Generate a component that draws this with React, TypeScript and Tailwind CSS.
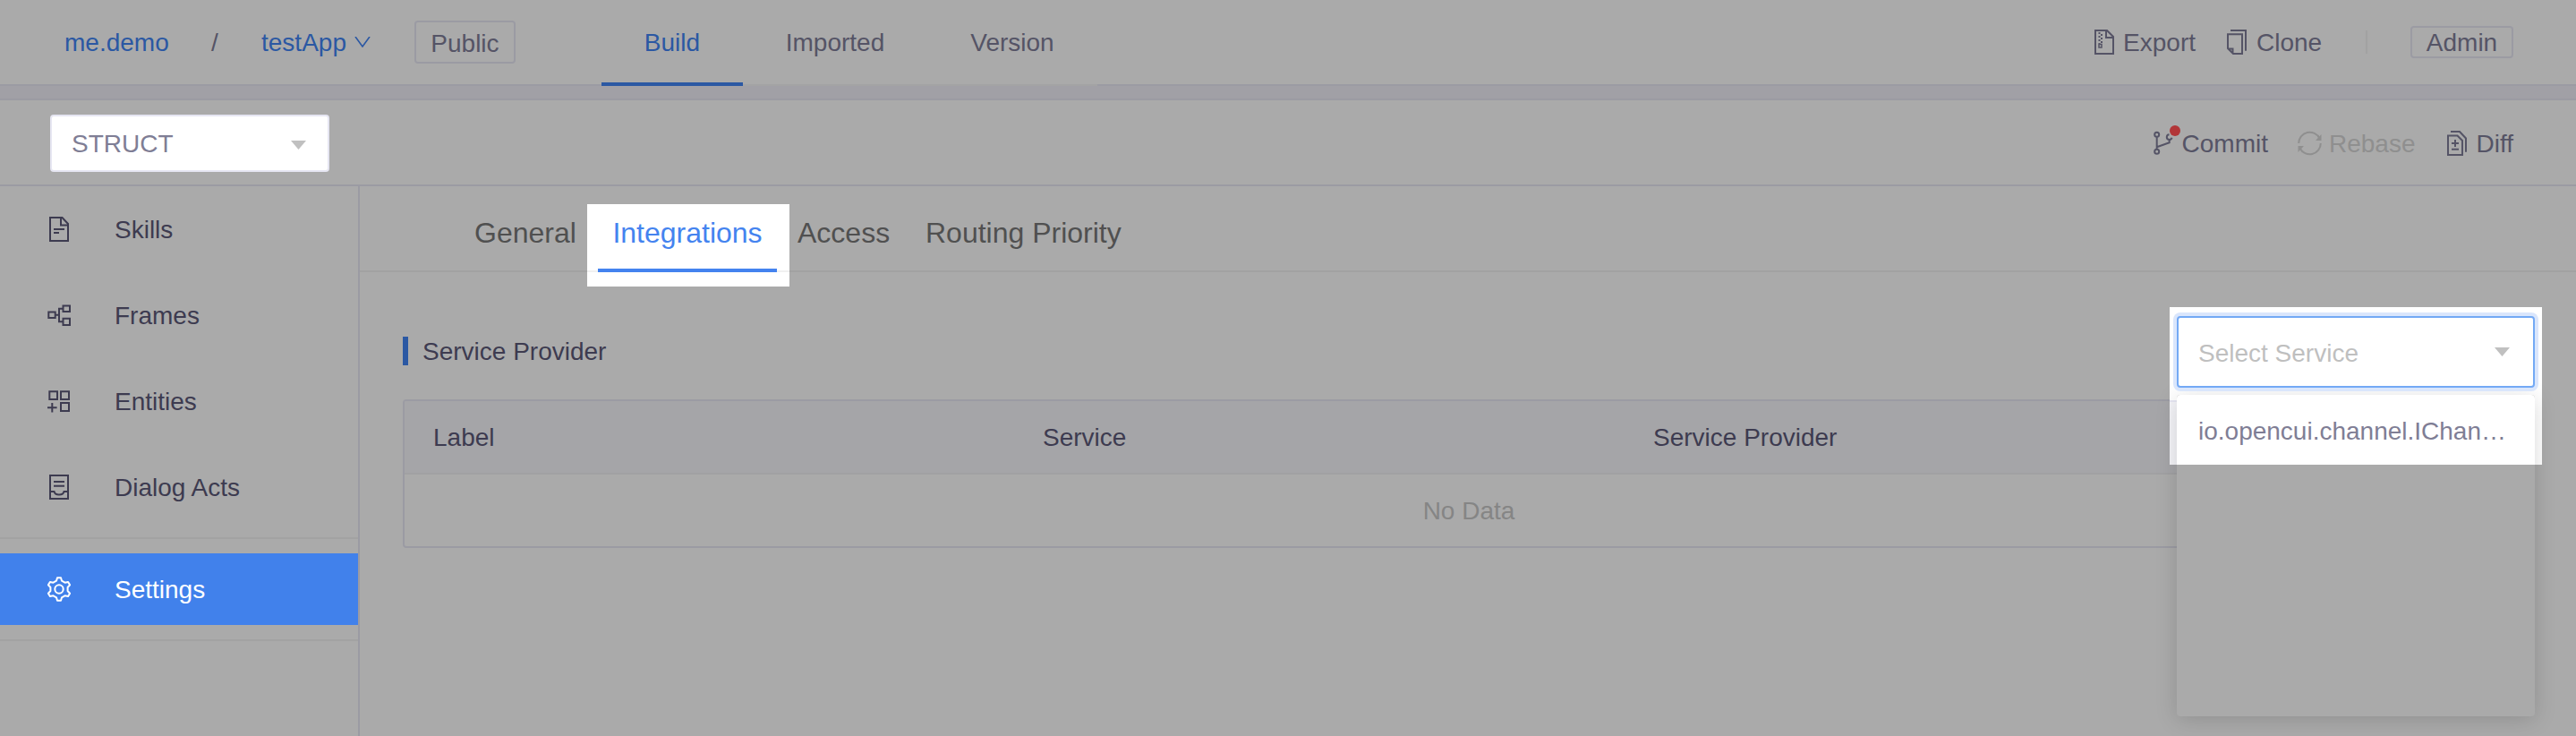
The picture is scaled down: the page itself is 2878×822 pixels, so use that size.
import type { ReactNode } from "react";

type IconProps = { className?: string; children: ReactNode; box?: string };

function Icon({ className = "", children, box = "0 0 28 28" }: IconProps) {
  return (
    <svg viewBox={box} fill="none" stroke="currentColor" strokeWidth="2" className={"shrink-0 " + className}>
      {children}
    </svg>
  );
}

const FileIcon = () => (
  <Icon className="size-7">
    <path d="M4 1h13.500L24 8v19H4z" />
    <path d="M16 1v8.500h8" />
    <path d="M8 14h12M8 18h6" />
  </Icon>
);
const TreeIcon = () => (
  <Icon className="size-7">
    <path d="M2.300 10.500h7.400V17H2.300zM18.500 3.500H26V10h-7.500zM18.500 17.800H26V25h-7.500zM10 13.800h4M18 6.800h-4v14.500h4" />
  </Icon>
);
const GridIcon = () => (
  <Icon className="size-7">
    <path d="M3.300 3.300H12V12H3.300zM16 3.300h9V12h-9zM16 16h9v9h-9zM1 21.300h10.600M6.300 16v10.600" />
  </Icon>
);
const InboxIcon = () => (
  <Icon className="size-7">
    <path d="M4 1h20v26H4zM8 8h12M8 12.800h12M4 19h4.500c1 4.600 10 4.600 11 0H24" />
  </Icon>
);
const GearIcon = () => (
  <Icon className="size-7">
    <circle cx="14" cy="14" r="4.700" />
    <path
      strokeLinejoin="round"
      d="M12 1.200h4l1 3.500 3.500 2 3.600-.8 2 3.400-2.500 2.700v4l2.500 2.700-2 3.400-3.600-.8-3.500 2-1 3.500h-4l-1-3.500-3.500-2-3.600.8-2-3.400L4.400 16v-4L1.900 9.300l2-3.400 3.600.8 3.500-2z"
    />
  </Icon>
);

const menu = [
  { label: "Skills", icon: <FileIcon /> },
  { label: "Frames", icon: <TreeIcon /> },
  { label: "Entities", icon: <GridIcon /> },
  { label: "Dialog Acts", icon: <InboxIcon /> },
];

function Header() {
  return (
    <header className="flex h-24 shrink-0 border-b-2 border-[#9b9ba3] text-[#555466]">
      <div className="flex w-[672px] shrink-0 items-center pl-[72px] text-[#2b58a3]">
        <span className="w-[164px] pt-0.5">me.demo</span>
        <span className="w-14 pt-0.5 text-[#555466]">/</span>
        <span className="pt-0.5">testApp</span>
        <Icon className="ml-[9px] h-3 w-[18px]" box="0 0 18 12">
          <path d="M1 0l8 11 8-11" strokeWidth="1.600" />
        </Icon>
        <span className="ml-[49px] flex h-12 w-[113px] items-center justify-center rounded border-2 border-[#9b9ba3] pt-1 text-[#555466]">
          Public
        </span>
      </div>
      <nav className="-mb-0.5 flex">
        <span className="flex w-[158px] items-center justify-center border-b-4 border-[#2b58a3] pt-1 text-[#2b58a3]">Build</span>
        <span className="flex w-[206px] items-center justify-center border-b-2 border-[#a3a3a4] pt-0.5">Imported</span>
        <span className="flex w-[190px] items-center justify-center border-b-2 border-[#a3a3a4] pt-0.5">Version</span>
      </nav>
      <div className="ml-auto flex items-center pr-[70px]">
        <Icon className="h-7 w-[22px]" box="0 0 22 28">
          <path d="M1 1h13l7 7v19H1zM13 1v8h8" />
          <path d="M5.500 3v13M8 5v12" strokeDasharray="2 2" />
          <path d="M5 16.500h3v3.500H5z" strokeWidth="1.500" />
        </Icon>
        <span className="ml-2.5 pt-0.5">Export</span>
        <Icon className="ml-[35px] h-7 w-[22px]" box="0 0 22 28">
          <path d="M1 5.300h16V27H7l-6-6zM4 1h17v22.700M1 21.500h5.500V27" />
        </Icon>
        <span className="ml-[11px] w-[74px] pt-0.5">Clone</span>
        <span className="ml-12 h-[26px] w-0.5 bg-[#a2a2a2]" />
        <span className="ml-12 flex h-9 w-[115px] items-center justify-center rounded border-2 border-[#9b9ba3] pt-0.5">Admin</span>
      </div>
    </header>
  );
}

function Toolbar() {
  return (
    <div className="flex h-24 shrink-0 items-center border-b-2 border-[#9b9ba3] pt-0.5 pr-[70px] pl-14 text-[#555466]">
      <div className="flex h-16 w-[312px] items-center justify-between rounded border-2 border-[#e6e6f2] bg-white pr-6 pl-[22px] text-[#7f7e95]">
        <span className="pt-px">STRUCT</span>
        <span className="mt-1 h-2.5 w-[17px] bg-[#c0c0c0] [clip-path:polygon(0_0,100%_0,50%_100%)]" />
      </div>
      <div className="ml-auto flex items-center">
        <span className="relative flex">
          <Icon className="h-7 w-[22px]" box="0 0 22 28">
            <circle cx="3.700" cy="4.300" r="2.500" />
            <circle cx="3.700" cy="23.300" r="2.500" />
            <path d="M17.500 4.200a2.900 2.900 0 1 0 3 3.600" />
            <path d="M3.700 7v13.500M3.700 18.300l14-5V9.500" />
          </Icon>
          <span className="absolute -top-1.5 left-[18px] size-3 rounded-full bg-[#b23638]" />
        </span>
        <span className="ml-2.5 pt-px">Commit</span>
        <span className="ml-[33px] flex items-center text-[#8f8f8f]">
          <Icon className="size-7">
            <path d="M1.200 14A12.300 12.300 0 0 1 24.500 8.500M25.800 14A12.300 12.300 0 0 1 2.500 19.500" />
            <path d="M26.500 4v7H20zM.5 24v-7H7z" fill="currentColor" stroke="none" />
          </Icon>
          <span className="ml-[7px] pt-px">Rebase</span>
        </span>
        <Icon className="ml-[35px] h-7 w-[22px]" box="0 0 22 28">
          <path d="M1 5.500h10.500l5.500 5.500v16H1zM4 1h10l7 7.500v15.200M5 14h8M9 10v8M5 20.800h8" />
        </Icon>
        <span className="ml-[11px] pt-px">Diff</span>
      </div>
    </div>
  );
}

function Sidebar() {
  return (
    <aside className="w-[402px] shrink-0 border-r-2 border-[#9b9ba3] text-[#3d3b50]">
      {menu.map((item) => (
        <div key={item.label} className="flex h-24 items-center gap-[48px] pl-[52px]">
          {item.icon}
          <span className="pt-0.5">{item.label}</span>
        </div>
      ))}
      <div className="mt-2 border-y-2 border-[#a2a2a2] py-4">
        <div className="flex h-20 items-center gap-[48px] bg-[#4181eb] pl-[52px] text-white">
          <GearIcon />
          <span className="pt-0.5">Settings</span>
        </div>
      </div>
    </aside>
  );
}

function Tabs() {
  return (
    <nav className="flex h-24 border-b-2 border-[#a2a2a2] pl-32 text-[32px] text-[#505050]">
      <span className="w-[126px] pt-9">General</span>
      <span className="mt-5 flex h-[92px] w-[226px] shrink-0 bg-white">
        <span className="mt-[74px] h-0.5 w-3 bg-[#f0f0f0]" />
        <span className="flex h-[76px] w-[200px] justify-center border-b-4 border-[#4483ef] pt-4 text-[#4483ef]">Integrations</span>
        <span className="mt-[74px] h-0.5 w-3.5 bg-[#f0f0f0]" />
      </span>
      <span className="ml-[9px] w-[143px] pt-9">Access</span>
      <span className="pt-9">Routing Priority</span>
    </nav>
  );
}

function ProviderTable() {
  return (
    <section className="pt-[72px] pr-[46px] pl-12 text-[#3d3b50]">
      <h2 className="flex h-8 items-center border-l-[6px] border-[#2b58a3] pt-0.5 pl-4">Service Provider</h2>
      <div className="mt-[38px] overflow-hidden rounded border-2 border-[#9b9ba3]">
        <div className="grid h-[82px] grid-cols-[681px_682px_682px_1fr] items-center border-b-2 border-[#a1a1a3] bg-[#a5a5a8] pt-px pl-8">
          <span>Label</span>
          <span>Service</span>
          <span>Service Provider</span>
        </div>
        <div className="flex h-20 items-center justify-center pt-0.5 text-[#858585]">No Data</div>
      </div>
    </section>
  );
}

function ServiceSelect() {
  return (
    <div className="absolute top-[135px] left-[2022px] h-[176px] w-[416px] bg-white">
      <div className="absolute top-[104px] left-0 h-[72px] w-2 border-t-2 border-[#e6e6f2] bg-[#f4f4f8]" />
      <div className="absolute top-[98px] left-2 h-[359px] w-[400px] rounded bg-[#aaaaaa] shadow-[0_4px_24px_rgba(0,0,0,0.15)]" />
      <div className="absolute top-[98px] left-2 h-[78px] w-[400px] rounded-t bg-white px-6 leading-[82px] text-[#7f7e95]">
        <div className="truncate">io.opencui.channel.IChannel</div>
      </div>
      <div className="absolute top-2.5 left-2 flex h-20 w-[400px] items-center justify-between rounded border-2 border-[#73a9f5] bg-white pr-[26px] pl-[22px] text-[#bfbfbf] shadow-[0_0_0_4px_#dae6fc]">
        <span className="pt-[3px]">Select Service</span>
        <span className="h-2.5 w-[17px] bg-[#c0c0c0] [clip-path:polygon(0_0,100%_0,50%_100%)]" />
      </div>
    </div>
  );
}

export default function App() {
  return (
    <div className="flex h-[822px] w-[2878px] flex-col overflow-hidden bg-[#aaaaaa] font-['Liberation_Sans',Arial,sans-serif] text-[28px] leading-8 whitespace-nowrap">
      <Header />
      <div className="h-4 shrink-0 border-b-2 border-[#9b9ba3] bg-[#a1a0a6]" />
      <Toolbar />
      <div className="flex flex-1">
        <Sidebar />
        <main className="relative flex-1">
          <Tabs />
          <ProviderTable />
          <ServiceSelect />
        </main>
      </div>
    </div>
  );
}
